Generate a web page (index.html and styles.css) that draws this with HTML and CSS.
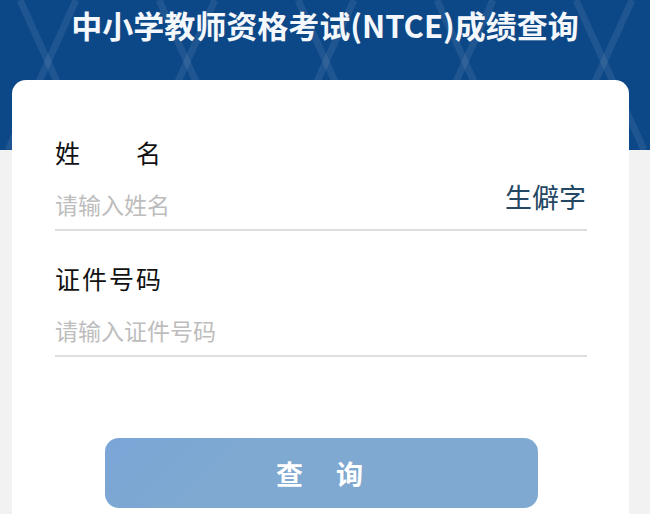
FILE: index.html
```html
<!DOCTYPE html>
<html lang="zh-CN">
<head>
    <meta charset="UTF-8">
    <meta name="viewport" content="width=device-width, initial-scale=1.0">
    <title>成绩查询</title>
    <link rel="stylesheet" href="styles.css">
</head>
<body>
    <header class="header">
        <svg class="header-pattern" viewBox="0 0 650 150" width="650" height="150">
            <g stroke="rgba(255,255,255,0.08)" stroke-width="7" fill="none">
                <line x1="76" y1="0" x2="8" y2="150"/>
                <line x1="20" y1="0" x2="88" y2="150"/>
                <line x1="215" y1="0" x2="147" y2="150"/>
                <line x1="159" y1="0" x2="227" y2="150"/>
                <line x1="354" y1="0" x2="286" y2="150"/>
                <line x1="298" y1="0" x2="366" y2="150"/>
                <line x1="493" y1="0" x2="425" y2="150"/>
                <line x1="437" y1="0" x2="505" y2="150"/>
                <line x1="632" y1="0" x2="564" y2="150"/>
                <line x1="576" y1="0" x2="644" y2="150"/>
            </g>
        </svg>
        <h1 class="title">中小学教师资格考试(NTCE)成绩查询</h1>
    </header>

    <main class="card">
        <div class="field">
            <label class="field-label" for="name">姓　　名</label>
            <div class="field-row">
                <input class="field-input" type="text" id="name" placeholder="请输入姓名">
                <a class="rare-link">生僻字</a>
            </div>
        </div>
        <div class="field">
            <label class="field-label" for="idno">证件号码</label>
            <div class="field-row">
                <input class="field-input" type="text" id="idno" placeholder="请输入证件号码">
            </div>
        </div>
        <button class="submit">查　询</button>
    </main>
</body>
</html>
```

FILE: styles.css
```css
body {
    margin: 0;
    padding: 0;
    background: #f2f2f2;
    font-family: "Noto Sans CJK SC", "Noto Sans", sans-serif;
    color: #111;
    overflow: hidden;
}

.header {
    position: relative;
    height: 150px;
    background: #0c4787;
    overflow: hidden;
}

.header-pattern {
    position: absolute;
    left: 0;
    top: 0;
}

.title {
    position: relative;
    margin: 0;
    padding-top: 4px;
    text-align: center;
    color: #f4f7fb;
    font-size: 31px;
    line-height: 42px;
    font-weight: 700;
}

.card {
    margin: -70px 21px 0 12px;
    padding: 56px 42px 6px 43px;
    background: #fff;
    border-radius: 14px 14px 0 0;
    position: relative;
}

.field-label {
    display: block;
    font-size: 25px;
    line-height: 32px;
    letter-spacing: 2px;
    color: #111;
}

.field-row {
    display: flex;
    align-items: flex-end;
    height: 63px;
    box-sizing: border-box;
    padding-bottom: 10px;
    border-bottom: 2px solid #dedede;
}

.field + .field {
    margin-top: 31px;
}

.field-input {
    flex: 1;
    border: none;
    outline: none;
    padding: 0;
    font-family: inherit;
    font-size: 23px;
    line-height: 30px;
    height: 30px;
    color: #333;
    background: transparent;
}

.field-input::placeholder {
    color: #bdbdbd;
}

.rare-link {
    font-size: 27px;
    line-height: 30px;
    margin-bottom: 7px;
    margin-right: 1px;
    color: #244863;
}

.submit {
    display: block;
    width: 433px;
    height: 70px;
    margin: 81px auto 0 auto;
    border: none;
    border-radius: 14px;
    background: linear-gradient(135deg, #7aa5d6 0%, #7fa9d1 30%, #7fa9d1 100%);
    color: #fff;
    font-family: inherit;
    font-size: 27px;
    font-weight: 700;
    letter-spacing: 3px;
}
```
